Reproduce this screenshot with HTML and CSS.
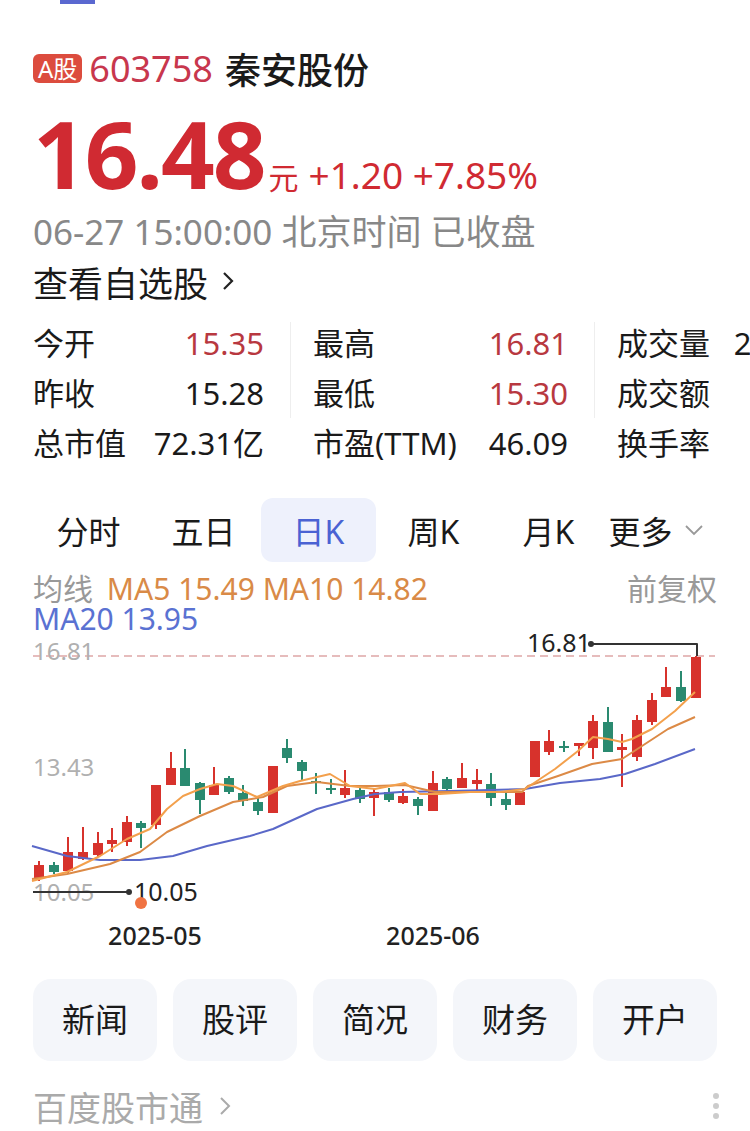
FILE: index.html
```html
<!DOCTYPE html>
<html>
	<head>
		<meta charset="utf-8">
		<meta name="viewport" content="width=device-width, initial-scale=1.0">
		<link rel="stylesheet" href="styles.css">
		<title>秦安股份 603758</title>
	</head>
	<body>
		<div class="topbar"><i></i></div>
		<div class="page">
			<div class="title">
				<span class="badge">A股</span>
				<span class="code">603758</span>
				<span class="name">秦安股份</span>
			</div>
			<div class="price">
				<span class="now">16.48</span>
				<span class="unit">元</span>
				<span class="chg">+1.20 +7.85%</span>
			</div>
			<div class="time">06-27 15:00:00 北京时间 已收盘</div>
			<div class="watch">查看自选股<svg width="20" height="24" viewBox="0 0 20 24"><polyline points="6,4 14,12 6,20" fill="none" stroke="#222" stroke-width="2.2"/></svg></div>

			<div class="stats">
				<div class="col col1">
					<p><span>今开</span><b class="red">15.35</b></p>
					<p><span>昨收</span><b>15.28</b></p>
					<p><span>总市值</span><b>72.31亿</b></p>
				</div>
				<div class="sep"></div>
				<div class="col col2">
					<p><span>最高</span><b class="red">16.81</b></p>
					<p><span>最低</span><b class="red">15.30</b></p>
					<p><span>市盈(TTM)</span><b>46.09</b></p>
				</div>
				<div class="sep"></div>
				<div class="col col3">
					<p><span>成交量</span><b>20.41万手</b></p>
					<p><span>成交额</span><b>3.21亿</b></p>
					<p><span>换手率</span><b>4.66%</b></p>
				</div>
			</div>

			<div class="tabs">
				<span>分时</span>
				<span>五日</span>
				<span class="active">日K</span>
				<span>周K</span>
				<span>月K</span>
				<span class="more">更多<svg width="24" height="16" viewBox="0 0 24 16"><polyline points="3,4 11,12 19,4" fill="none" stroke="#999" stroke-width="1.8"/></svg></span>
			</div>

			<div class="legend">
				<div class="ma">
					<p><span class="gray">均线</span> <span class="orange">MA5 15.49 MA10 14.82</span></p>
					<p class="blue">MA20 13.95</p>
				</div>
				<span class="gray">前复权</span>
			</div>

			<svg class="chart" width="750" height="325" viewBox="0 635 750 325">
				<line x1="33" y1="657" x2="715" y2="657" stroke="#e6bcbc" stroke-width="1.6" stroke-dasharray="8 5"/>
				<text class="axis" x="33" y="661">16.81</text>
				<text class="axis" x="33" y="777">13.43</text>
				<text class="axis" x="33" y="902">10.05</text>

				<g class="up">
					<line x1="39" y1="862" x2="39" y2="882"/><rect x="34" y="866" width="10" height="14"/>
					<line x1="68" y1="838" x2="68" y2="874"/><rect x="63" y="853" width="10" height="19"/>
					<line x1="83" y1="828" x2="83" y2="861"/><rect x="78" y="853" width="10" height="7"/>
					<line x1="98" y1="833" x2="98" y2="858"/><rect x="93" y="844" width="10" height="12"/>
					<line x1="112" y1="829" x2="112" y2="853"/><rect x="107" y="841" width="10" height="4"/>
					<line x1="127" y1="817" x2="127" y2="847"/><rect x="122" y="823" width="10" height="20"/>
					<line x1="156" y1="786" x2="156" y2="830"/><rect x="151" y="786" width="10" height="40"/>
					<line x1="171" y1="753" x2="171" y2="786"/><rect x="166" y="769" width="10" height="17"/>
					<line x1="214" y1="768" x2="214" y2="796"/><rect x="209" y="786" width="10" height="10"/>
					<line x1="273" y1="767" x2="273" y2="814"/><rect x="268" y="767" width="10" height="47"/>
					<line x1="345" y1="771" x2="345" y2="799"/><rect x="340" y="789" width="10" height="7"/>
					<line x1="374" y1="790" x2="374" y2="817"/><rect x="369" y="793" width="10" height="6"/>
					<line x1="403" y1="790" x2="403" y2="805"/><rect x="398" y="797" width="10" height="7"/>
					<line x1="433" y1="772" x2="433" y2="812"/><rect x="428" y="784" width="10" height="28"/>
					<line x1="462" y1="764" x2="462" y2="789"/><rect x="457" y="779" width="10" height="10"/>
					<line x1="477" y1="770" x2="477" y2="793"/><rect x="472" y="781" width="10" height="4"/>
					<line x1="520" y1="793" x2="520" y2="806"/><rect x="515" y="793" width="10" height="13"/>
					<line x1="535" y1="742" x2="535" y2="778"/><rect x="530" y="742" width="10" height="36"/>
					<line x1="549" y1="731" x2="549" y2="756"/><rect x="544" y="742" width="10" height="11"/>
					<line x1="579" y1="744" x2="579" y2="757"/><rect x="574" y="744" width="10" height="3"/>
					<line x1="593" y1="716" x2="593" y2="760"/><rect x="588" y="722" width="10" height="27"/>
					<line x1="622" y1="735" x2="622" y2="788"/><rect x="617" y="748" width="10" height="3"/>
					<line x1="637" y1="716" x2="637" y2="762"/><rect x="632" y="721" width="10" height="37"/>
					<line x1="652" y1="694" x2="652" y2="726"/><rect x="647" y="701" width="10" height="22"/>
					<line x1="666" y1="668" x2="666" y2="698"/><rect x="661" y="688" width="10" height="10"/>
					<line x1="696" y1="657" x2="696" y2="699"/><rect x="691" y="658" width="10" height="41"/>
				</g>
				<g class="down">
					<line x1="54" y1="863" x2="54" y2="875"/><rect x="49" y="866" width="10" height="7"/>
					<line x1="141" y1="822" x2="141" y2="849"/><rect x="136" y="824" width="10" height="5"/>
					<line x1="185" y1="750" x2="185" y2="787"/><rect x="180" y="769" width="10" height="18"/>
					<line x1="200" y1="783" x2="200" y2="815"/><rect x="195" y="784" width="10" height="17"/>
					<line x1="229" y1="777" x2="229" y2="795"/><rect x="224" y="779" width="10" height="14"/>
					<line x1="243" y1="786" x2="243" y2="807"/><rect x="238" y="794" width="10" height="8"/>
					<line x1="258" y1="797" x2="258" y2="816"/><rect x="253" y="803" width="10" height="9"/>
					<line x1="287" y1="740" x2="287" y2="764"/><rect x="282" y="749" width="10" height="10"/>
					<line x1="302" y1="761" x2="302" y2="782"/><rect x="297" y="763" width="10" height="9"/>
					<line x1="316" y1="774" x2="316" y2="795"/><rect x="311" y="782" width="10" height="2"/>
					<line x1="331" y1="780" x2="331" y2="795"/><rect x="326" y="789" width="10" height="2"/>
					<line x1="360" y1="789" x2="360" y2="804"/><rect x="355" y="791" width="10" height="9"/>
					<line x1="389" y1="789" x2="389" y2="803"/><rect x="384" y="793" width="10" height="8"/>
					<line x1="418" y1="798" x2="418" y2="816"/><rect x="413" y="800" width="10" height="7"/>
					<line x1="447" y1="778" x2="447" y2="792"/><rect x="442" y="780" width="10" height="10"/>
					<line x1="491" y1="774" x2="491" y2="807"/><rect x="486" y="785" width="10" height="14"/>
					<line x1="506" y1="794" x2="506" y2="811"/><rect x="501" y="800" width="10" height="6"/>
					<line x1="564" y1="742" x2="564" y2="753"/><rect x="559" y="747" width="10" height="2"/>
					<line x1="608" y1="708" x2="608" y2="753"/><rect x="603" y="723" width="10" height="30"/>
					<line x1="681" y1="672" x2="681" y2="703"/><rect x="676" y="688" width="10" height="14"/>
				</g>

				<polyline class="ma20" points="32,847 67,857 100,861 140,861 173,857 207,847 250,837 273,830 317,810 353,800 375,795 400,793 450,792 525,790 560,784 600,780 625,775 655,765 695,750"/>
				<polyline class="ma10" points="32,880 67,875 110,865 140,853 167,833 200,817 233,803 263,798 287,787 317,783 350,787 375,787 405,786 435,793 522,793 528,787 558,777 592,765 622,760 642,747 668,730 695,718"/>
				<polyline class="ma5" points="32,882 67,873 100,857 127,840 150,830 167,810 183,797 200,790 217,785 233,787 257,798 283,787 300,782 330,775 350,787 375,790 405,784 420,795 440,795 470,793 500,793 525,790 555,770 578,752 593,738 608,740 622,743 632,740 652,730 675,712 695,693"/>

				<text class="mark" x="527" y="653">16.81</text>
				<polyline points="591,645 697,645 697,657" fill="none" stroke="#333" stroke-width="1.6"/>
				<circle cx="591" cy="645" r="3" fill="#333"/>

				<line x1="33" y1="893" x2="129" y2="893" stroke="#333" stroke-width="1.6"/>
				<circle cx="129" cy="893" r="3" fill="#333"/>
				<text class="mark" x="134" y="902">10.05</text>
				<circle cx="141" cy="904" r="6" fill="#f07342"/>

				<text class="date" x="155" y="946">2025-05</text>
				<text class="date" x="433" y="946">2025-06</text>
			</svg>

			<div class="actions">
				<span>新闻</span>
				<span>股评</span>
				<span>简况</span>
				<span>财务</span>
				<span>开户</span>
			</div>

			<div class="footer">
				<span>百度股市通<svg width="20" height="24" viewBox="0 0 20 24"><polyline points="6,4 14,12 6,20" fill="none" stroke="#aaa" stroke-width="2"/></svg></span>
				<svg class="dots" width="8" height="28" viewBox="0 0 8 28"><circle cx="4" cy="4" r="3" fill="#ccc"/><circle cx="4" cy="14" r="3" fill="#ccc"/><circle cx="4" cy="24" r="3" fill="#ccc"/></svg>
			</div>
		</div>
	</body>
</html>
```

FILE: styles.css
```css
* {
	margin: 0;
	padding: 0;
	box-sizing: border-box;
}

body {
	width: 750px;
	overflow: hidden;
	background-color: #fff;
	color: #1a1a1a;
	font-family: "Noto Sans", "Noto Sans CJK SC", sans-serif;
}

.topbar {
	height: 4px;
}

.topbar i {
	display: block;
	margin-left: 60px;
	width: 35px;
	height: 4px;
	background-color: #5a68d0;
}

.page {
	padding: 0 33px;
}

.title {
	display: flex;
	align-items: center;
	margin-top: 42px;
	height: 44px;
}

.badge {
	padding: 0 5px;
	height: 29px;
	line-height: 29px;
	border-radius: 6px;
	background-color: #dc4c3e;
	color: #fff;
	font-size: 24px;
}

.code {
	margin-left: 7px;
	color: #c8374d;
	font-size: 36px;
}

.name {
	margin-left: 12px;
	font-size: 36px;
	font-weight: 500;
}

.price {
	display: flex;
	align-items: baseline;
	margin-top: 16px;
	height: 94px;
	color: #d02a32;
}

.now {
	font-size: 94px;
	line-height: 94px;
	font-weight: 700;
	letter-spacing: -2px;
}

.unit {
	margin-left: 4px;
	font-size: 30px;
}

.chg {
	margin-left: 10px;
	font-size: 37px;
}

.time {
	margin-top: 10px;
	height: 44px;
	line-height: 44px;
	color: #888;
	font-size: 35px;
	white-space: nowrap;
}

.watch {
	display: flex;
	align-items: center;
	margin-top: 5px;
	height: 44px;
	font-size: 35px;
}

.watch svg {
	margin-left: 10px;
}

.stats {
	display: flex;
	margin-top: 15px;
	height: 150px;
	font-size: 31px;
}

.col {
	flex-shrink: 0;
}

.col p {
	display: flex;
	justify-content: space-between;
	height: 50px;
	line-height: 50px;
	white-space: nowrap;
}

.col b {
	font-weight: 400;
}

.col1 {
	width: 231px;
}

.col2 {
	width: 255px;
}

.col3 {
	width: 258px;
}

.red {
	color: #b8383f;
}

.sep {
	flex-shrink: 0;
	margin: 4px 22px 0 26px;
	width: 1px;
	height: 96px;
	background-color: #eee;
}

.tabs {
	display: flex;
	margin: 30px 0 0 -2px;
	height: 64px;
	font-size: 32px;
}

.tabs span {
	display: flex;
	align-items: center;
	justify-content: center;
	width: 115px;
	border-radius: 12px;
}

.tabs .active {
	background-color: #eef1fc;
	color: #4a62d3;
}

.tabs .more {
	margin-left: -6px;
}

.tabs .more svg {
	margin-left: 10px;
}

.legend {
	display: flex;
	justify-content: space-between;
	margin-top: 12px;
	height: 60px;
	line-height: 30px;
	font-size: 30px;
}

.legend .orange {
	margin-left: 6px;
}

.gray {
	color: #999;
}

.orange {
	color: #d98a47;
}

.blue {
	color: #5a72d2;
}

.chart {
	display: block;
	margin: 0 -33px;
}

.chart .up {
	fill: #d7322c;
	stroke: #d7322c;
}

.chart .down {
	fill: #2a8a70;
	stroke: #2a8a70;
}

.chart line {
	stroke-width: 2;
}

.chart rect {
	stroke: none;
}

.chart polyline {
	fill: none;
	stroke-width: 2;
	stroke-linejoin: round;
}

.ma5 {
	stroke: #f3a04c;
}

.ma10 {
	stroke: #dc8a46;
}

.ma20 {
	stroke: #5a68c8;
}

.axis {
	fill: #b0b0b0;
	font-size: 24px;
}

.mark {
	fill: #222;
	font-size: 25px;
}

.date {
	fill: #222;
	font-size: 25px;
	font-weight: 500;
	text-anchor: middle;
}

.actions {
	display: flex;
	gap: 16px;
	margin-top: 20px;
}

.actions span {
	flex: 1;
	height: 82px;
	line-height: 82px;
	border-radius: 18px;
	background-color: #f4f6fa;
	text-align: center;
	font-size: 33px;
}

.footer {
	display: flex;
	justify-content: space-between;
	align-items: center;
	margin-top: 23px;
	height: 44px;
	color: #aaa;
	font-size: 34px;
}

.footer span {
	display: flex;
	align-items: center;
}

.footer span svg {
	margin-left: 12px;
}

.footer .dots {
	margin-right: -3px;
}
```
